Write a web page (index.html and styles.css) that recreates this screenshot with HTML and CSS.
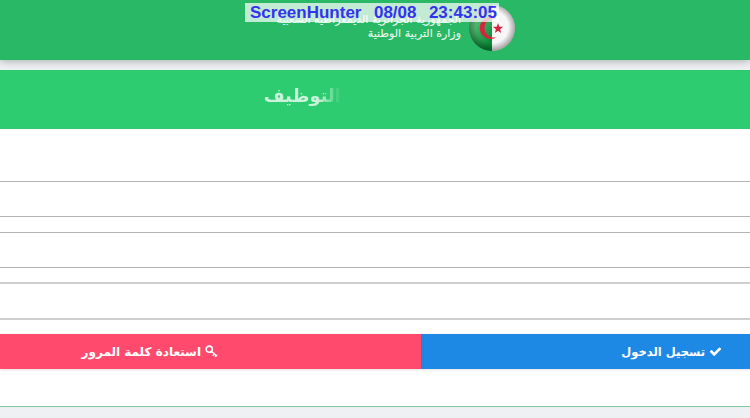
FILE: index.html

```html
<!DOCTYPE html>
<html lang="ar" dir="rtl">
<head>
    <meta charset="UTF-8">
    <meta name="viewport" content="width=device-width, initial-scale=1.0">
    <title>التوظيف</title>
    <link rel="stylesheet" href="styles.css">
</head>
<body>
    <div class="stamp" dir="ltr">ScreenHunter&nbsp; 08/08&nbsp; 23:43:05</div>

    <header class="site-header">
        <svg class="flag" viewBox="0 0 46 48" aria-hidden="true">
            <defs>
                <radialGradient id="shine" cx="50%" cy="48%" r="50%">
                    <stop offset="70%" stop-color="#000" stop-opacity="0"/>
                    <stop offset="100%" stop-color="#000" stop-opacity="0.32"/>
                </radialGradient>
                <linearGradient id="green" x1="0" y1="0" x2="0.6" y2="1">
                    <stop offset="0%" stop-color="#8fd6a6"/>
                    <stop offset="55%" stop-color="#3fae63"/>
                    <stop offset="100%" stop-color="#0a8a38"/>
                </linearGradient>
            </defs>
            <path d="M23 1a23 23 0 0 0 0 46z" fill="url(#green)"/>
            <path d="M23 1a23 23 0 0 1 0 46z" fill="#f6f7f6"/>
            <path d="M28 15a11 11 0 1 0 0 18a9.500 9.500 0 1 1 0-18z" fill="#d8233a"/>
            <path d="M29 19l1.300 3.700 3.900 0.100-3.100 2.400 1.100 3.800-3.200-2.200-3.200 2.200 1.100-3.800-3.100-2.400 3.900-0.100z" fill="#d8233a"/>
            <circle cx="23" cy="24" r="23" fill="url(#shine)"/>
        </svg>
        <div class="site-name">
            <div>الجمهورية الجزائرية الديمقراطية الشعبية</div>
            <div>وزارة التربية الوطنية</div>
        </div>
    </header>

    <section class="title-bar">
        <h1>التوظيف</h1>
    </section>

    <main class="login-box">
        <form class="login-form">
            <input class="field" type="text">
            <input class="field" type="password">
            <input class="field field-last" type="text">
            <div class="actions">
                <button class="btn btn-login" type="button">
                    <svg class="icon" viewBox="0 0 1792 1792" aria-hidden="true">
                        <path d="M1671 566q0 40-28 68l-724 724-136 136q-28 28-68 28t-68-28l-136-136-362-362q-28-28-28-68t28-68l136-136q28-28 68-28t68 28l294 295 656-657q28-28 68-28t68 28l136 136q28 28 28 68z" fill="#fff"/>
                    </svg>
                    تسجيل الدخول
                </button>
                <button class="btn btn-reset" type="button">
                    <svg class="icon" viewBox="0 0 14 14" aria-hidden="true">
                        <circle cx="4.500" cy="4.500" r="3.300" fill="none" stroke="#fff" stroke-width="1.800"/>
                        <path d="M7 7l6 5M10 9.500l-1.500 2M12 11l-1.200 1.600" fill="none" stroke="#fff" stroke-width="1.600"/>
                    </svg>
                    استعادة كلمة المرور
                </button>
            </div>
        </form>
    </main>
</body>
</html>
```

FILE: styles.css

```css
* {
    box-sizing: border-box;
    margin: 0;
    padding: 0;
}

body {
    background-color: #eff0f4;
    font-family: "DejaVu Sans", "Noto Sans", sans-serif;
    height: 418px;
    overflow: hidden;
}

.stamp {
    position: absolute;
    top: 3px;
    left: 245px;
    z-index: 2;
    width: 254px;
    height: 19px;
    padding-left: 5px;
    background-color: rgba(255, 255, 255, 0.72);
    color: #3333ee;
    font-family: "Liberation Sans", Arial, sans-serif;
    font-size: 17px;
    font-weight: bold;
    line-height: 19px;
    white-space: nowrap;
    word-spacing: 1.500px;
}

.site-header {
    display: flex;
    align-items: flex-start;
    gap: 8px;
    height: 60px;
    padding: 4px 235px 0 0;
    background-color: #29b865;
    box-shadow: 0 1px 8px rgba(0, 0, 0, 0.3);
}

.flag {
    width: 46px;
    height: 48px;
    flex-shrink: 0;
}

.site-name {
    padding-top: 9px;
    color: rgba(255, 255, 255, 0.9);
    font-size: 11px;
    line-height: 14px;
    white-space: nowrap;
    -webkit-text-stroke: 0.2px rgba(255, 255, 255, 0.7);
}

.title-bar {
    height: 59px;
    margin-top: 10px;
    padding: 0 409px 9px 0;
    background-color: #2ecc71;
    display: flex;
    align-items: center;
}

.title-bar h1 {
    color: #fff;
    font-size: 18px;
    font-weight: bold;
    -webkit-mask-image: linear-gradient(to right, rgba(0, 0, 0, 0.75) 70%, transparent 100%);
    mask-image: linear-gradient(to right, rgba(0, 0, 0, 0.75) 70%, transparent 100%);
}

.login-box {
    height: 278px;
    padding-top: 52px;
    background-color: #fff;
    border-bottom: 1px solid #7fc99a;
}

.login-form {
    display: flex;
    flex-direction: column;
}

.field {
    display: block;
    height: 36px;
    margin-bottom: 15px;
    border: 1px solid #b5b5b5;
    border-width: 1px 0;
    background-color: #fff;
}

.field-last {
    height: 38px;
    margin-top: -1px;
    margin-bottom: 14px;
    border-width: 2px 0;
    border-color: #cfcfcf;
}

.actions {
    display: flex;
}

.btn {
    display: flex;
    align-items: center;
    gap: 4px;
    height: 35px;
    border: none;
    color: #fff;
    font-family: inherit;
    font-size: 12px;
    font-weight: bold;
    box-shadow: 0 1px 3px rgba(0, 0, 0, 0.12);
}

.btn-login {
    width: 329px;
    padding-right: 28px;
    background-color: #1e88e5;
    font-size: 11.500px;
}

.btn-reset {
    width: 421px;
    padding-right: 203px;
    background-color: #ff4a6e;
}

.icon {
    width: 13px;
    height: 13px;
    flex-shrink: 0;
}
```
